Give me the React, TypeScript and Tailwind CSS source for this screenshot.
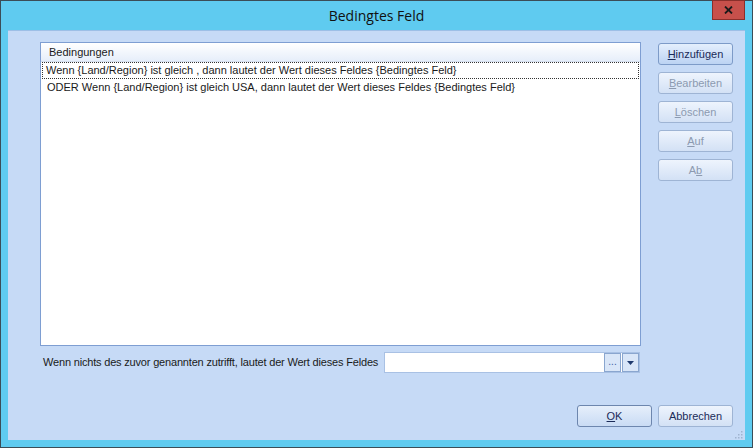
import React from 'react';

type BtnProps = {
  label: React.ReactNode;
  disabled?: boolean;
  primary?: boolean;
  focused?: boolean;
};

// Windows-style push button with mnemonic underline
const DialogButton: React.FC<BtnProps> = ({ label, disabled, primary, focused }) => (
  <button
    className={`h-[22px] w-[75px] rounded-[3px] border text-[11px] leading-none flex items-center justify-center ${
      focused
        ? 'bg-gradient-to-b from-[#e4effd] to-[#bcd3f3] border-[#7d9bc8] text-[#1b2b58]'
        : primary
        ? 'bg-gradient-to-b from-[#e6effb] to-[#c9dbf4] border-[#6d86ae] text-[#1b2b58]'
        : 'bg-gradient-to-b from-[#eef4fd] to-[#d3e1f5] border-[#9eb4d4] text-[#1b2b58]'
    } ${disabled ? 'text-[#8c9ab0]' : ''}`}
  >
    {label}
  </button>
);

const conditions = [
  'Wenn {Land/Region} ist gleich , dann lautet der Wert dieses Feldes {Bedingtes Feld}',
  'ODER Wenn {Land/Region} ist gleich USA, dann lautet der Wert dieses Feldes {Bedingtes Feld}',
];

export default function App() {
  return (
    <div
      className="w-[753px] h-[448px] bg-[#5fcbf0] border border-[#3b4d57] flex flex-col"
      style={{ fontFamily: '"Liberation Sans", Arial, sans-serif' }}
    >
      {/* Title bar */}
      <div className="h-[29px] shrink-0 flex items-center relative">
        <div
          className="flex-1 text-center text-[14px] text-[#111] pb-[1px]"
          style={{ fontFamily: '"Open Sans", "Noto Sans", sans-serif' }}
        >
          Bedingtes Feld
        </div>
        <div className="absolute right-[7px] top-[-1px] w-[33px] h-[20px] bg-[#c7504b] border border-[#8a2f2b] flex items-center justify-center">
          <svg width="9" height="8" viewBox="0 0 9 8">
            <path d="M1 0.5 L8 7.5 M8 0.5 L1 7.5" stroke="#1a1a1a" strokeWidth="1.8" />
          </svg>
        </div>
      </div>

      {/* Client area */}
      <div className="mx-[7px] mb-[7px] flex-1 bg-[#c6daf6] border-t border-[#9dbfe6] flex flex-col pl-[32px] pr-[12px] pt-[11px] pb-[13px] relative">
        <div className="flex">
          <div className="flex-1 flex flex-col">
            {/* Condition list */}
            <div className="h-[304px] bg-white border border-[#7e9ed2] flex flex-col">
              <div className="h-[19px] bg-gradient-to-b from-white to-[#e6eefa] border-b border-[#d5dfee] text-[11px] text-[#1a1a1a] pl-[8px] flex items-center">
                Bedingungen
              </div>
              <div className="h-[17px] mx-[1px] border border-dotted border-[#333] text-[11px] text-[#1a1a1a] pl-[3px] flex items-center">
                {conditions[0]}
              </div>
              <div className="h-[17px] text-[11px] text-[#1a1a1a] pl-[6px] flex items-center">
                {conditions[1]}
              </div>
            </div>

            {/* Default value row */}
            <div className="flex items-center mt-[6px]">
              <span className="text-[11px] text-[#1a1a1a] ml-[3px] w-[341px] whitespace-nowrap tracking-[-0.18px]">
                Wenn nichts des zuvor genannten zutrifft, lautet der Wert dieses Feldes
              </span>
              <div className="h-[21px] flex-1 bg-white border border-[#a9c1e4] flex items-center justify-end mr-[1px]">
                <div className="h-[19px] w-[17px] border border-[#8aa6cf] bg-[#d9e6f8] text-[#3d5fa3] text-[10px] leading-none flex items-end justify-center pb-[4px]">
                  ...
                </div>
                <div className="h-[19px] w-[17px] ml-[1px] border border-[#8aa6cf] bg-[#d9e6f8] flex items-center justify-center">
                  <svg width="7" height="4" viewBox="0 0 7 4">
                    <path d="M0 0 H7 L3.5 4 Z" fill="#1f3a6e" />
                  </svg>
                </div>
              </div>
            </div>
          </div>

          {/* Side buttons */}
          <div className="w-[75px] ml-[17px] flex flex-col gap-[7px] pt-[1px]">
            <DialogButton focused label={<span><u className="underline-offset-1">H</u>inzufügen</span>} />
            <DialogButton disabled label={<span><u className="underline-offset-1">B</u>earbeiten</span>} />
            <DialogButton disabled label={<span><u className="underline-offset-1">L</u>öschen</span>} />
            <DialogButton disabled label={<span><u className="underline-offset-1">A</u>uf</span>} />
            <DialogButton disabled label={<span>A<u className="underline-offset-1">b</u></span>} />
          </div>
        </div>

        {/* Footer buttons */}
        <div className="mt-auto flex justify-end gap-[6px]">
          <DialogButton primary label={<span><u className="underline-offset-1">O</u>K</span>} />
          <DialogButton label="Abbrechen" />
        </div>

        {/* Resize grip */}
        <svg className="absolute right-[2px] bottom-[1px]" width="10" height="10" viewBox="0 0 10 10">
          {[
            [8, 2], [8, 5], [8, 8], [5, 5], [5, 8], [2, 8],
          ].map(([x, y]) => (
            <rect key={`${x}-${y}`} x={x} y={y} width="1.5" height="1.5" fill="#9fb3cf" />
          ))}
        </svg>
      </div>
    </div>
  );
}
